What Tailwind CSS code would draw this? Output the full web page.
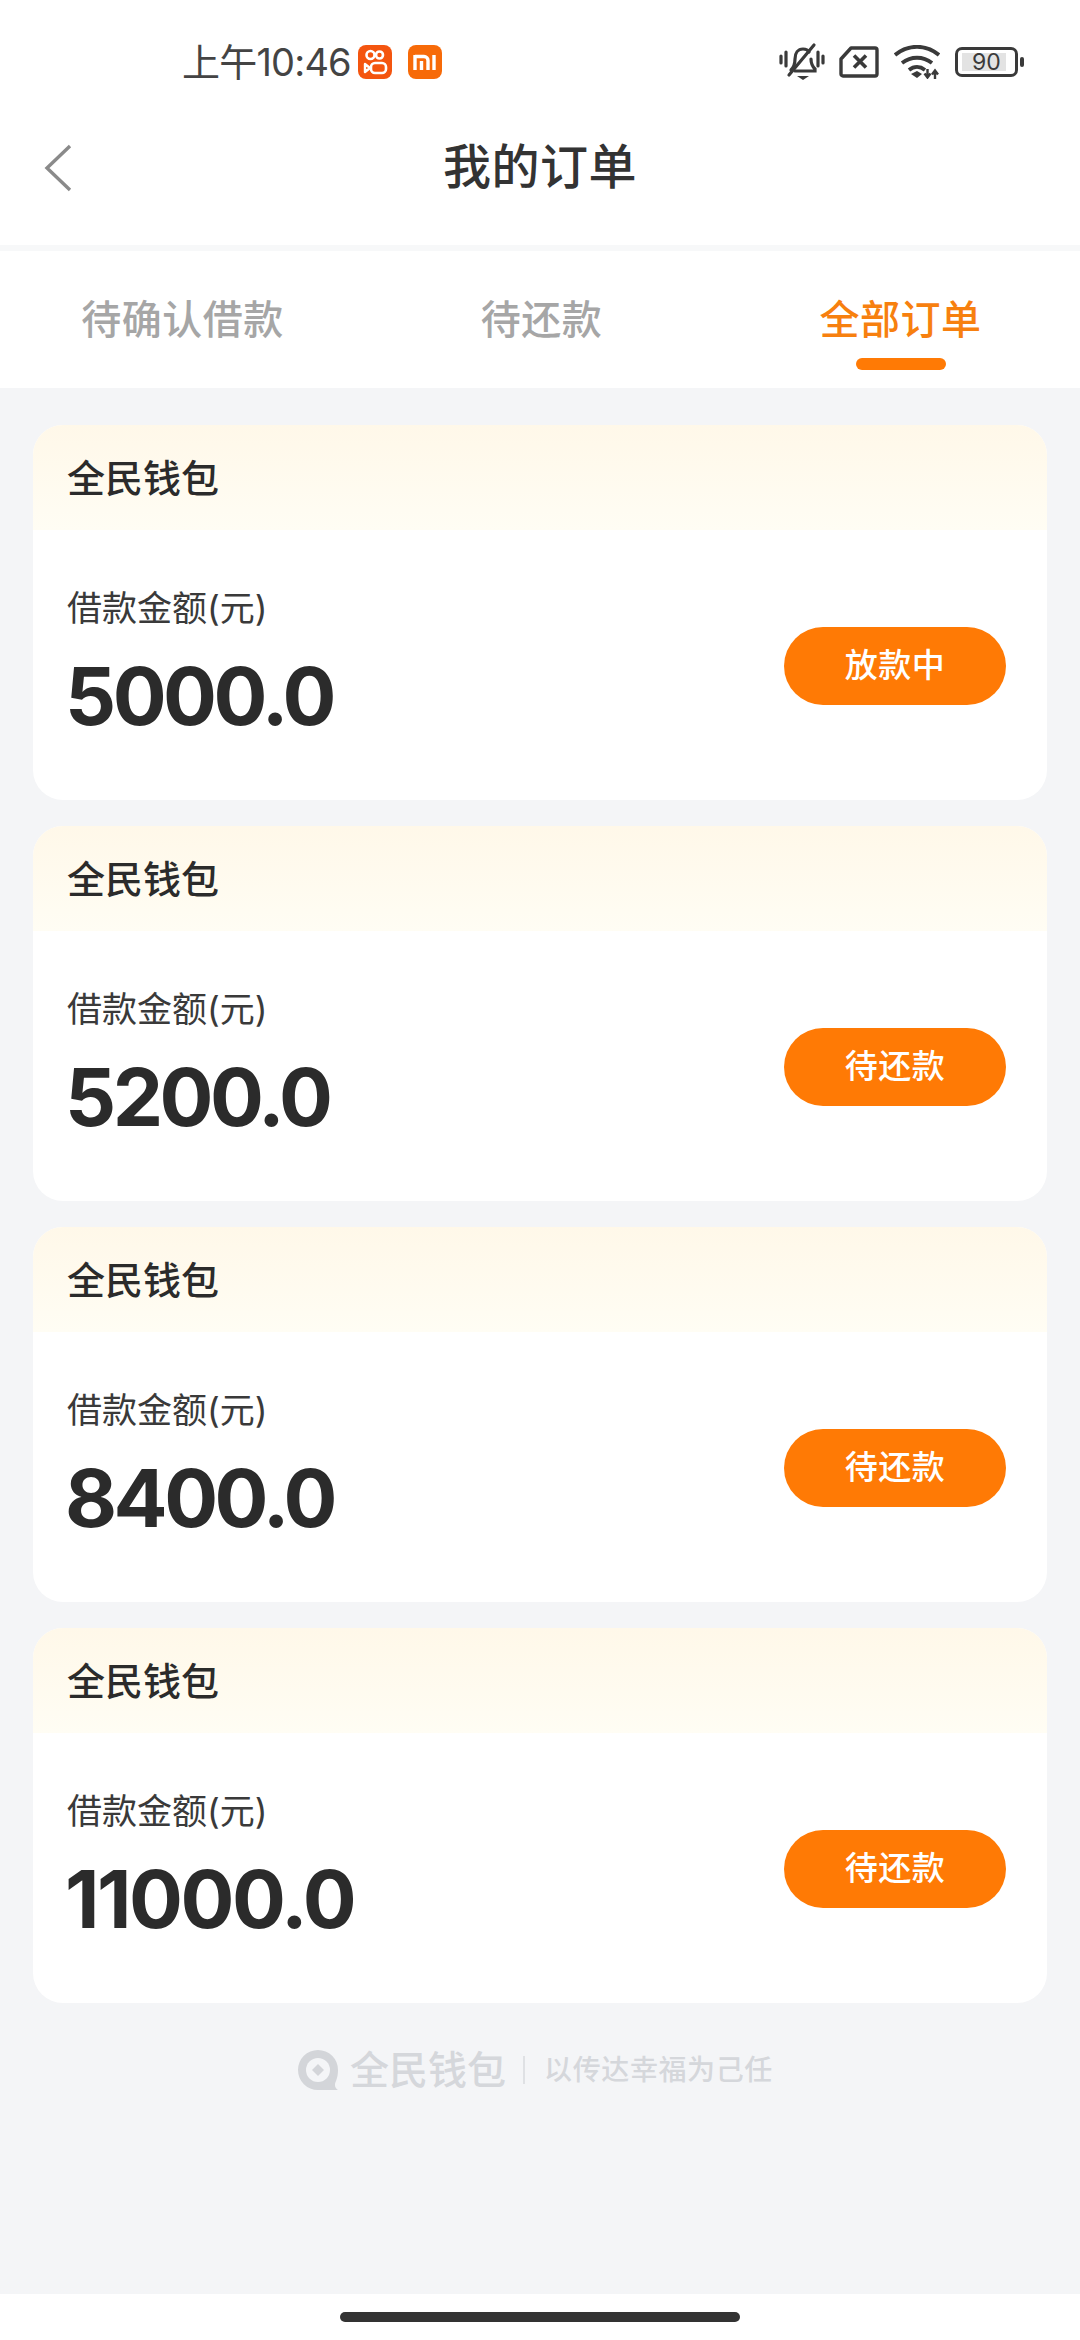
<!doctype html>
<html lang="zh">
<head>
<meta charset="utf-8">
<script src="https://cdn.jsdelivr.net/npm/@tailwindcss/browser@4"></script>
</head>
<body class="m-0 bg-white font-['Inter','Noto_Sans_CJK_SC',sans-serif]">
<div class="w-[1080px] h-[2340px] flex flex-col overflow-hidden bg-white">
  <!-- status bar -->
  <div class="h-[120px] shrink-0 flex items-center justify-between pl-[182px] pr-[56px] pt-[4px]">
    <div class="flex items-center">
      <span class="text-[38px] leading-none text-[#444] tracking-[-0.8px] w-[176px] whitespace-nowrap">上午10:46</span>
      <svg class="w-[34px] h-[34px]" viewBox="0 0 34 34"><rect width="34" height="34" rx="8" fill="#f4550f"/><g fill="none" stroke="#fff" stroke-width="2.600"><circle cx="12.500" cy="10" r="4"/><circle cx="21.500" cy="10" r="3.500"/><rect x="13" y="18" width="15" height="10" rx="4"/></g><path d="M7 19l5 4-5 4z" fill="none" stroke="#fff" stroke-width="2.400" stroke-linejoin="round"/></svg>
      <svg class="w-[34px] h-[34px] ml-[16px]" viewBox="0 0 34 34"><rect width="34" height="34" rx="8" fill="#f76a08"/><path d="M7 11.500h9a4 4 0 0 1 4 4V25M7 10v15M13.500 16v9M26 10v15" fill="none" stroke="#fff" stroke-width="3.400"/></svg>
    </div>
    <div class="flex items-center">
      <svg class="w-[46px] h-[40px]" viewBox="0 0 46 40"><g fill="none" stroke="#3a3a3a" stroke-width="3.200" stroke-linecap="round"><path d="M2 14v7M7 10v14M44 14v7M39 10v14"/><path d="M12 28c3-3 4-6 4-11 0-6 3-10 8-10 3 0 5 1 6 3M32 17c0 4 1 7 4 10v2H16"/><path d="M10 33L35 3"/></g><path d="M18 34h12l-6 4z" fill="#3a3a3a"/></svg>
      <svg class="w-[40px] h-[32px] ml-[14px]" viewBox="0 0 40 32"><path d="M2 13L12 2h24a2 2 0 0 1 2 2v24a2 2 0 0 1-2 2H4a2 2 0 0 1-2-2z" fill="none" stroke="#3a3a3a" stroke-width="3.400" stroke-linejoin="round"/><path d="M15 9.500l12 12M27 9.500l-12 12" stroke="#3a3a3a" stroke-width="3.600"/></svg>
      <svg class="w-[46px] h-[34px] ml-[15px]" viewBox="0 0 46 34"><g fill="none" stroke="#3a3a3a" stroke-width="3.800"><path d="M1 10c13-11 31-11 44 0"/><path d="M8 18c9-7 21-7 30 0"/><path d="M15 25c5-4 11-4 16 0"/></g><path d="M17 29l6-3 5 3-5 4z" fill="#3a3a3a"/><g fill="none" stroke="#3a3a3a" stroke-width="2.400"><path d="M33.500 24v8M30.500 28.500l3 4 3-4"/><path d="M41 34v-8M38 29.500l3-4 3 4"/></g></svg>
      <div class="ml-[15px] relative w-[63px] h-[30px] border-[3px] border-[#3a3a3a] rounded-[7px] flex items-center justify-center">
        <span class="absolute left-[4px] right-[9px] top-[3px] bottom-[3px] bg-[#e3e3e3]"></span>
        <span class="relative text-[23px] leading-none text-[#3a3a3a] font-normal">90</span>
      </div>
      <span class="ml-[2px] w-[4px] h-[10px] rounded-full bg-[#3a3a3a]"></span>
    </div>
  </div>
  <!-- title bar -->
  <div class="h-[125px] shrink-0 relative flex justify-center pt-[19px]">
    <svg class="absolute left-[44px] top-[24px] w-[28px] h-[48px]" viewBox="0 0 28 48"><path d="M26 2L3 24l23 22" fill="none" stroke="#8a8a8a" stroke-width="3.400"/></svg>
    <span class="text-[48px] leading-[56px] font-medium text-[#333] tracking-[0.5px]">我的订单</span>
  </div>
  <div class="h-[6px] shrink-0 bg-[#f7f8f9]"></div>
  <!-- tabs -->
  <div class="h-[137px] shrink-0 grid grid-cols-3 pl-[3px] pt-[45px] text-center">
    <span class="text-[40px] leading-[48px] font-medium text-[#a6a6a6] tracking-[0.5px]">待确认借款</span>
    <span class="text-[40px] leading-[48px] font-medium text-[#a6a6a6] tracking-[0.5px]">待还款</span>
    <div class="flex flex-col items-center">
      <span class="text-[40px] leading-[48px] font-medium text-[#f7800f] tracking-[0.5px]">全部订单</span>
      <span class="mt-[14px] w-[90px] h-[12px] rounded-full bg-[#ff7a05]"></span>
    </div>
  </div>
  <!-- main -->
  <div class="flex-1 bg-[#f4f5f7] flex flex-col pt-[37px] px-[33px]">
    <div class="flex flex-col gap-[26px]">
      <div class="h-[375px] rounded-[30px] bg-white overflow-hidden flex flex-col">
        <div class="h-[105px] shrink-0 px-[34px] pt-[28px] bg-gradient-to-b from-[#fff8e9] to-[#fffdf4] text-[38px] leading-[50px] font-medium text-[#2b2b2b]">全民钱包</div>
        <div class="flex-1 flex justify-between pl-[34px] pr-[41px]">
          <div class="pt-[54px]"><div class="text-[35px] leading-[48px] text-[#3a3a3a]">借款金额(元)</div><div class="mt-[20px] -ml-[2px] text-[80px] leading-[88px] font-bold text-[#2b2b2b] tracking-[-3.500px]">5000.0</div></div>
          <div class="mt-[97px] w-[222px] h-[78px] rounded-full bg-[#ff7a05] flex items-center justify-center text-[33px] font-medium text-white tracking-[0.5px]">放款中</div>
        </div>
      </div>
      <div class="h-[375px] rounded-[30px] bg-white overflow-hidden flex flex-col">
        <div class="h-[105px] shrink-0 px-[34px] pt-[28px] bg-gradient-to-b from-[#fff8e9] to-[#fffdf4] text-[38px] leading-[50px] font-medium text-[#2b2b2b]">全民钱包</div>
        <div class="flex-1 flex justify-between pl-[34px] pr-[41px]">
          <div class="pt-[54px]"><div class="text-[35px] leading-[48px] text-[#3a3a3a]">借款金额(元)</div><div class="mt-[20px] -ml-[2px] text-[80px] leading-[88px] font-bold text-[#2b2b2b] tracking-[-3.500px]">5200.0</div></div>
          <div class="mt-[97px] w-[222px] h-[78px] rounded-full bg-[#ff7a05] flex items-center justify-center text-[33px] font-medium text-white tracking-[0.5px]">待还款</div>
        </div>
      </div>
      <div class="h-[375px] rounded-[30px] bg-white overflow-hidden flex flex-col">
        <div class="h-[105px] shrink-0 px-[34px] pt-[28px] bg-gradient-to-b from-[#fff8e9] to-[#fffdf4] text-[38px] leading-[50px] font-medium text-[#2b2b2b]">全民钱包</div>
        <div class="flex-1 flex justify-between pl-[34px] pr-[41px]">
          <div class="pt-[54px]"><div class="text-[35px] leading-[48px] text-[#3a3a3a]">借款金额(元)</div><div class="mt-[20px] -ml-[2px] text-[80px] leading-[88px] font-bold text-[#2b2b2b] tracking-[-3.500px]">8400.0</div></div>
          <div class="mt-[97px] w-[222px] h-[78px] rounded-full bg-[#ff7a05] flex items-center justify-center text-[33px] font-medium text-white tracking-[0.5px]">待还款</div>
        </div>
      </div>
      <div class="h-[375px] rounded-[30px] bg-white overflow-hidden flex flex-col">
        <div class="h-[105px] shrink-0 px-[34px] pt-[28px] bg-gradient-to-b from-[#fff8e9] to-[#fffdf4] text-[38px] leading-[50px] font-medium text-[#2b2b2b]">全民钱包</div>
        <div class="flex-1 flex justify-between pl-[34px] pr-[41px]">
          <div class="pt-[54px]"><div class="text-[35px] leading-[48px] text-[#3a3a3a]">借款金额(元)</div><div class="mt-[20px] -ml-[2px] text-[80px] leading-[88px] font-bold text-[#2b2b2b] tracking-[-2.500px]">11000.0</div></div>
          <div class="mt-[97px] w-[222px] h-[78px] rounded-full bg-[#ff7a05] flex items-center justify-center text-[33px] font-medium text-white tracking-[0.5px]">待还款</div>
        </div>
      </div>
    </div>
    <!-- footer brand -->
    <div class="mt-[43px] pr-[10px] flex items-center justify-center text-[#d5d7db]">
      <svg class="w-[42px] h-[42px]" viewBox="0 0 42 42"><path d="M21 1a20 20 0 1 0 0 40h20c-3-2-4-5-2-9 1.300-3 2-7 2-11A20 20 0 0 0 21 1z" fill="#d3d5d9"/><circle cx="21" cy="21" r="12" fill="#f4f5f7"/><path d="M21 15l6 6-6 6-6-6z" fill="#d3d5d9"/></svg>
      <span class="ml-[11px] text-[39px] leading-[48px] font-medium">全民钱包</span>
      <span class="ml-[17px] w-[2px] h-[28px] bg-[#dfe1e4]"></span>
      <span class="ml-[19px] text-[28px] leading-[40px] font-medium tracking-[0.600px]">以传达幸福为己任</span>
    </div>
  </div>
  <!-- bottom bar -->
  <div class="h-[46px] shrink-0 bg-white flex justify-center pt-[18px]">
    <span class="w-[400px] h-[10px] rounded-full bg-[#333]"></span>
  </div>
</div>
</body>
</html>
